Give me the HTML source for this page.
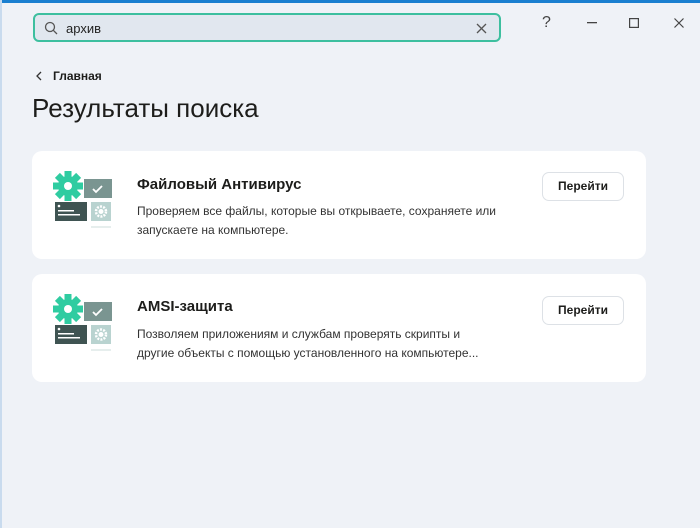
<!DOCTYPE html>
<html><head><meta charset="utf-8"><style>
*{margin:0;padding:0;box-sizing:border-box}
body{width:700px;height:528px;background:#eff2f7;font-family:"Liberation Sans",sans-serif;position:relative;overflow:hidden;color:#1d1d1b}
.top{position:absolute;left:0;top:0;width:700px;height:3px;background:#1a7fd0}
.left{position:absolute;left:0;top:0;width:2px;height:528px;background:#c9dbee}
.search{position:absolute;left:33px;top:13px;width:468px;height:29px;border:2px solid #3dbf9f;border-radius:6px;background:#e1e7ef}
.search span{position:absolute;left:31px;top:6px;font-size:13px;color:#222}
.card{position:absolute;left:32px;width:614px;background:#fff;border-radius:10px}
.t{position:absolute;left:105px;font-size:15px;font-weight:bold;color:#1d1d1b}
.d{position:absolute;left:105px;font-size:12px;line-height:19px;color:#333;white-space:nowrap}
.btn{position:absolute;left:510px;width:82px;height:29px;border:1px solid #dde1e6;border-radius:7px;font-size:12px;font-weight:bold;text-align:center;line-height:27px;background:#fff}
.wc{position:absolute;top:14px;font-size:16px;color:#444}
</style></head><body>
<div class="top"></div><div class="left"></div>
<div class="search">
<svg style="position:absolute;left:9px;top:6px" width="14" height="14" viewBox="0 0 14 14"><circle cx="6" cy="6" r="4.5" fill="none" stroke="#555" stroke-width="1.3"/><path d="M9.3 9.3L13 13" stroke="#555" stroke-width="1.3"/></svg>
<span>архив</span>
<svg style="position:absolute;left:441px;top:8px" width="11" height="11" viewBox="0 0 11 11"><path d="M1 1L10 10M10 1L1 10" stroke="#555" stroke-width="1.3"/></svg>
</div>
<div class="wc" style="left:542px">?</div>
<svg style="position:absolute;left:587px;top:22px" width="10" height="2"><rect width="10" height="1.3" fill="#444"/></svg>
<svg style="position:absolute;left:629px;top:18px" width="10" height="10"><rect x=".6" y=".6" width="8.8" height="8.8" fill="none" stroke="#444" stroke-width="1.2"/></svg>
<svg style="position:absolute;left:674px;top:18px" width="10" height="10"><path d="M.5 .5L9.5 9.5M9.5 .5L.5 9.5" stroke="#444" stroke-width="1.2"/></svg>
<svg style="position:absolute;left:35px;top:71px" width="8" height="10"><path d="M6 1L2 5L6 9" fill="none" stroke="#333" stroke-width="1.3"/></svg>
<div style="position:absolute;left:53px;top:69px;font-size:12px;font-weight:bold">Главная</div>
<div style="position:absolute;left:32px;top:93px;font-size:26px;color:#1d1d1b">Результаты поиска</div>

<div class="card" style="top:151px;height:108px">
<svg style="position:absolute;left:20px;top:19px" width="62" height="64" viewBox="0 0 62 64">
<g transform="translate(16,16)" fill="#2fcca1"><circle r="10"/><rect x="-3.5" y="-15" width="7" height="30"/><rect x="-3.5" y="-15" width="7" height="30" transform="rotate(45)"/><rect x="-3.5" y="-15" width="7" height="30" transform="rotate(90)"/><rect x="-3.5" y="-15" width="7" height="30" transform="rotate(135)"/><circle r="4" fill="#fff"/></g>
<rect x="32" y="9" width="28" height="19" fill="#7a9591"/><path d="M41 19l3 3 6-6" fill="none" stroke="#fff" stroke-width="1.8"/>
<rect x="3" y="32" width="32" height="19" fill="#3f5452"/><circle cx="7" cy="36" r="1.3" fill="#fff"/><rect x="6" y="40" width="16" height="1.5" fill="#fff"/><rect x="6" y="44" width="22" height="1.5" fill="#fff"/>
<rect x="39" y="32" width="20" height="19" fill="#b9d3d0"/><circle cx="49" cy="41.5" r="5" fill="none" stroke="#fff" stroke-width="2.5" stroke-dasharray="2 1.2"/><circle cx="49" cy="41.5" r="2.5" fill="#fff"/>
<path d="M39 57h20" stroke="#dde8e7" stroke-width="1.5"/>
</svg>
<div class="t" style="top:25px">Файловый Антивирус</div>
<div class="d" style="top:51px">Проверяем все файлы, которые вы открываете, сохраняете или<br>запускаете на компьютере.</div>
<div class="btn" style="top:21px">Перейти</div>
</div>

<div class="card" style="top:274px;height:108px">
<svg style="position:absolute;left:20px;top:19px" width="62" height="64" viewBox="0 0 62 64">
<g transform="translate(16,16)" fill="#2fcca1"><circle r="10"/><rect x="-3.5" y="-15" width="7" height="30"/><rect x="-3.5" y="-15" width="7" height="30" transform="rotate(45)"/><rect x="-3.5" y="-15" width="7" height="30" transform="rotate(90)"/><rect x="-3.5" y="-15" width="7" height="30" transform="rotate(135)"/><circle r="4" fill="#fff"/></g>
<rect x="32" y="9" width="28" height="19" fill="#7a9591"/><path d="M41 19l3 3 6-6" fill="none" stroke="#fff" stroke-width="1.8"/>
<rect x="3" y="32" width="32" height="19" fill="#3f5452"/><circle cx="7" cy="36" r="1.3" fill="#fff"/><rect x="6" y="40" width="16" height="1.5" fill="#fff"/><rect x="6" y="44" width="22" height="1.5" fill="#fff"/>
<rect x="39" y="32" width="20" height="19" fill="#b9d3d0"/><circle cx="49" cy="41.5" r="5" fill="none" stroke="#fff" stroke-width="2.5" stroke-dasharray="2 1.2"/><circle cx="49" cy="41.5" r="2.5" fill="#fff"/>
<path d="M39 57h20" stroke="#dde8e7" stroke-width="1.5"/>
</svg>
<div class="t" style="top:24px">AMSI-защита</div>
<div class="d" style="top:51px">Позволяем приложениям и службам проверять скрипты и<br>другие объекты с помощью установленного на компьютере...</div>
<div class="btn" style="top:22px">Перейти</div>
</div>
</body></html>
